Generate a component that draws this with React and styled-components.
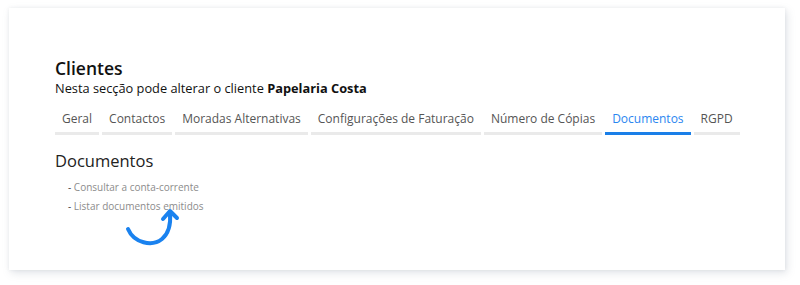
import React from "react";
import styled, { createGlobalStyle } from "styled-components";

const Global = createGlobalStyle`
  html, body { margin: 0; padding: 0; background: #ffffff; }
  body { font-family: "Open Sans", "Noto Sans", sans-serif; }
`;

const Page = styled.div`
  width: 800px;
  height: 285px;
  padding: 8px 15px 15px 9px;
  box-sizing: border-box;
`;

const Card = styled.div`
  position: relative;
  background: #fff;
  height: 262px;
  box-sizing: border-box;
  padding: 50px 46px 0 46px;
  box-shadow: 2px 3px 8px rgba(120, 130, 150, 0.22), 0 0 3px rgba(120, 130, 150, 0.12);
`;

const Title = styled.h1`
  margin: 0;
  font-size: 17.5px;
  font-weight: 600;
  color: #111;
  line-height: 20px;
`;

const Subtitle = styled.p`
  margin: 1px 0 0 0;
  font-size: 12.8px;
  font-weight: 500;
  color: #111;
  line-height: 18px;
  b { font-weight: 700; }
`;

const Tabs = styled.div`
  display: flex;
  gap: 3px;
  margin-top: 8px;
`;

const Tab = styled.div`
  padding: 5px 7px 4px;
  font-size: 12px;
  line-height: 18px;
  color: ${(p) => (p.$active ? "#2a86f0" : "#555")};
  border-bottom: 3px solid ${(p) => (p.$active ? "#1a7fe8" : "#eaeaea")};
  white-space: nowrap;
`;

const Section = styled.h2`
  margin: 15px 0 0 0;
  font-size: 16.5px;
  font-weight: 400;
  color: #222;
  line-height: 22px;
`;

const List = styled.ul`
  list-style: none;
  margin: 6px 0 0 13px;
  padding: 0;
`;

const Item = styled.li`
  font-size: 10px;
  line-height: 19px;
  color: #8c8c8c;
  &::before {
    content: "- ";
    color: #444;
  }
`;

const Arrow = styled.svg`
  position: absolute;
  left: 111px;
  top: 197px;
`;

const tabs = [
  "Geral",
  "Contactos",
  "Moradas Alternativas",
  "Configurações de Faturação",
  "Número de Cópias",
  "Documentos",
  "RGPD",
];

export default function App() {
  return (
    <>
      <Global />
      <Page>
        <Card>
          <Title>Clientes</Title>
          <Subtitle>
            Nesta secção pode alterar o cliente <b>Papelaria Costa</b>
          </Subtitle>
          <Tabs>
            {tabs.map((t) => (
              <Tab key={t} $active={t === "Documentos"}>
                {t}
              </Tab>
            ))}
          </Tabs>
          <Section>Documentos</Section>
          <List>
            <Item>Consultar a conta-corrente</Item>
            <Item>Listar documentos emitidos</Item>
          </List>
          <Arrow width="66" height="50" viewBox="0 0 66 50">
            <path
              d="M8 24 C 14 38, 32 42, 42 34 C 48 29, 51 20, 50 8"
              fill="none"
              stroke="#1a82ef"
              strokeWidth="4"
              strokeLinecap="round"
            />
            <path
              d="M43 14 L 50 6 L 57 13"
              fill="none"
              stroke="#1a82ef"
              strokeWidth="4"
              strokeLinecap="round"
              strokeLinejoin="round"
            />
          </Arrow>
        </Card>
      </Page>
    </>
  );
}
